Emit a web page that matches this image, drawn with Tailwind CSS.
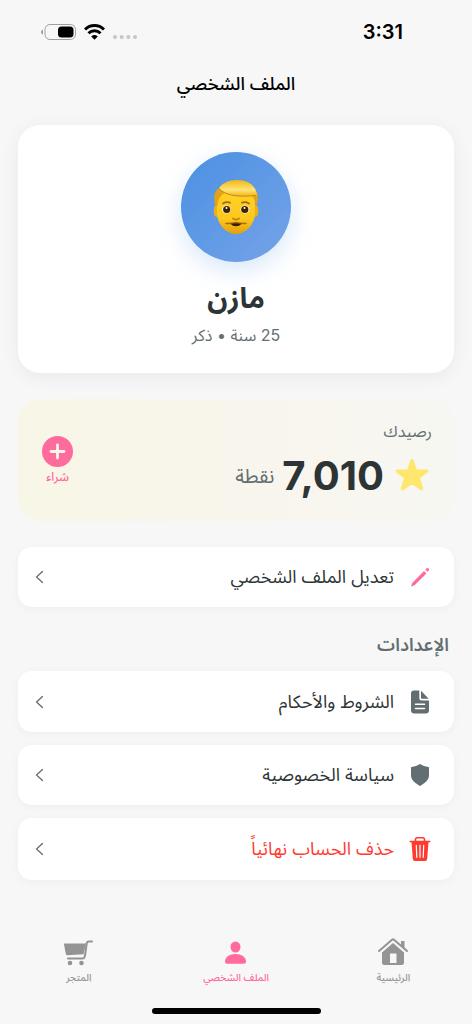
<!DOCTYPE html>
<html lang="ar" dir="rtl">
<head>
<meta charset="utf-8">
<meta name="viewport" content="width=device-width, initial-scale=1">
<title>الملف الشخصي</title>
<script src="https://cdn.jsdelivr.net/npm/@tailwindcss/browser@4"></script>
</head>
<body class="flex min-h-screen flex-col bg-[#f7f7f7] font-['Inter','Noto_Sans_Arabic','DejaVu_Sans',sans-serif] text-[#2d3436]">
  <header>
    <div class="flex h-16 items-center justify-between pr-[69px] pl-[41px]">
      <time class="text-xl font-semibold text-black">3:31</time>
      <div dir="ltr" class="flex items-center gap-2">
        <svg class="h-4 w-[35px]" viewBox="0 0 35 16" aria-hidden="true">
          <path d="M2 5.5Q0 6.500 0 8T2 10.500Z" fill="#999"/>
          <rect x="4" y=".5" width="30.500" height="15" rx="5" fill="none" stroke="#a0a0a0"/>
          <rect x="17" y="2.500" width="15.500" height="11" rx="3.500" fill="#000"/>
        </svg>
        <svg class="h-4 w-[21px]" viewBox="0 0 21 16" fill="none" stroke="#000" stroke-width="3" aria-hidden="true">
          <path d="M1 5.500A13.500 13.500 0 0 1 20 5.500M4.500 9.200A8.500 8.500 0 0 1 16.500 9.200"/>
          <path d="M10.500 15.700L7.200 12.400Q10.500 9.500 13.800 12.400Z" fill="#000" stroke="none"/>
        </svg>
        <svg class="mt-2.5 h-1 w-6" viewBox="0 0 24 4" fill="#c6c6c6" aria-hidden="true">
          <circle cx="2" cy="2" r="2"/><circle cx="8.700" cy="2" r="2"/><circle cx="15.300" cy="2" r="2"/><circle cx="22" cy="2" r="2"/>
        </svg>
      </div>
    </div>
    <h1 class="pt-0.5 text-center text-lg leading-9 font-medium text-black">الملف الشخصي</h1>
  </header>

  <main class="flex flex-col px-[18px] pt-[23px]">
    <section class="flex flex-col items-center rounded-[22px] bg-white pt-[27px] pb-6 shadow-[0_4px_20px_rgba(0,0,0,0.06)]">
      <div class="grid size-[110px] place-items-center rounded-full bg-linear-to-br from-[#4a90e2] to-[#74a3e8] shadow-[0_8px_24px_rgba(74,144,226,0.22)]">
        <svg class="h-[56px] w-[46px]" viewBox="0 0 46 56" role="img" aria-label="رجل">
          <defs>
            <linearGradient id="face" x1="0" y1="0" x2="0" y2="1"><stop offset="0" stop-color="#ffd42c"/><stop offset=".7" stop-color="#fcc81c"/><stop offset="1" stop-color="#e2a00a"/></linearGradient>
            <linearGradient id="hair" x1="0" y1="0" x2="0" y2="1"><stop offset="0" stop-color="#f2b50f"/><stop offset=".6" stop-color="#ffe478"/><stop offset="1" stop-color="#f3b616"/></linearGradient>
          </defs>
          <ellipse cx="3.500" cy="32" rx="2.800" ry="6" fill="#eeb01a"/><ellipse cx="42.500" cy="32" rx="2.800" ry="6" fill="#eeb01a"/>
          <path d="M4 18C4 8 12 5 23 5s19 3 19 13v16c0 11-9 21-19 21S4 45 4 34Z" fill="url(#face)"/>
          <path d="M2.500 27C-.5 17 2 11 7 8.500L12 14c-4 2-7 5-7.500 13Z" fill="#e5a313"/>
          <path d="M43 27c3-7 2-12 0-15L38 16c3 2 4 6 5 11Z" fill="#e5a313"/>
          <path d="M6 9.500C9 4 16 1 24 1c12 0 19 6 20 15.500-14 1.500-31 1.500-38-7Z" fill="url(#hair)"/>
          <path d="M6 9.500c7 8 22 8.500 37 7" fill="none" stroke="#c9890c" stroke-width="1"/>
          <path d="M10 24.500q3.500-2.200 7-.8M29 23.700q3.500-1.400 7 .8" fill="none" stroke="#a56a10" stroke-width="1.800" stroke-linecap="round"/>
          <ellipse cx="13.500" cy="30.500" rx="4.500" ry="4" fill="#fff8dc"/><ellipse cx="32" cy="30.500" rx="4.500" ry="4" fill="#fff8dc"/>
          <circle cx="13.700" cy="30.500" r="3.600" fill="#3a2205"/><circle cx="31.800" cy="30.500" r="3.600" fill="#3a2205"/>
          <circle cx="13.500" cy="28.900" r="1" fill="#fff"/><circle cx="31.500" cy="28.900" r="1" fill="#fff"/>
          <path d="M20 39.500q3 2.200 6 0" fill="none" stroke="#c4850d" stroke-width="2" stroke-linecap="round"/>
          <path d="M13 44.500q5 .3 10-.9 5 1.200 10 .9" fill="none" stroke="#a86c0d" stroke-width="1.600" stroke-linecap="round"/>
          <path d="M17.500 44.700q5.500-1 11 0-2 2.600-5.500 2.600t-5.500-2.600Z" fill="#3b1d05"/>
        </svg>
      </div>
      <h2 class="mt-4 text-[28px] leading-10 font-bold">مازن</h2>
      <p class="mt-1 text-base leading-[27px] text-[#636e72]">25 سنة • ذكر</p>
    </section>

    <section class="mt-[26px] flex items-center justify-between rounded-[22px] bg-linear-to-r from-[#f8f6e6] via-[#f8f5ec] to-[#f7f7f2] pt-5 pb-[18px] pr-[22px] pl-6">
      <div>
        <p class="text-base leading-6 text-[#636e72]">رصيدك</p>
        <div class="mt-1.5 flex items-center">
          <svg class="size-10" viewBox="0 0 40 40" aria-hidden="true"><path d="M20 4.500L23.800 15H35L26.300 21.600L29.700 33L20 26.200L10.300 33L13.700 21.600L5 15H16.200Z" fill="#ffe66d" stroke="#ffe66d" stroke-width="3" stroke-linejoin="round"/></svg>
          <strong class="mr-2 text-[40px] leading-[54px] font-bold">7,010</strong>
          <span class="mr-2 text-xl text-[#636e72]">نقطة</span>
        </div>
      </div>
      <button type="button" class="flex flex-col items-center text-xs leading-5 font-medium text-[#ff6b9d]">
        <svg class="size-[31px]" viewBox="0 0 31 31" aria-hidden="true"><circle cx="15.500" cy="15.500" r="15.500" fill="#ff6b9d"/><path d="M15.500 9v13M9 15.500h13" stroke="#f9f6ea" stroke-width="2.800" stroke-linecap="round"/></svg>
        <span>شراء</span>
      </button>
    </section>

    <button type="button" class="mt-[26px] flex h-[60px] items-center rounded-[14px] bg-white pr-[22px] pl-4 shadow-[0_2px_10px_rgba(0,0,0,0.04)]">
      <svg class="size-6" viewBox="0 0 24 24" fill="#ff6b9d" aria-hidden="true"><path d="M16 5.900l2.500 2.500L6.500 20.300l-3.500 1.300 1.200-3.600ZM17.300 4.600l1.400-1.300q1.100-.8 2 .1t.1 2l-1.300 1.400Z"/></svg>
      <span class="mr-3.5 text-lg">تعديل الملف الشخصي</span>
      <svg class="mr-auto h-4 w-3" viewBox="0 0 12 16" fill="none" stroke="#636e72" stroke-width="1.300" stroke-linecap="round" stroke-linejoin="round" aria-hidden="true"><path d="M8.500 2.500L2.500 8l6 5.500"/></svg>
    </button>

    <h2 class="mt-6 mr-[5px] text-lg leading-7 font-semibold text-[#636e72]">الإعدادات</h2>

    <nav class="mt-3 flex flex-col gap-[13px]">
      <a href="#terms" class="flex h-[61px] items-center rounded-[14px] bg-white pr-[22px] pl-4 shadow-[0_2px_10px_rgba(0,0,0,0.04)]">
        <svg class="size-6" viewBox="0 0 24 24" aria-hidden="true"><path d="M6 .5h5.300V8q0 2.500 2.500 2.500H21V20q0 3.500-3.500 3.500h-11Q3 23.500 3 20V3.500Q3 .5 6 .5Z" fill="#636e72"/><path d="M13 .8L20.700 8.800H14.200Q13 8.800 13 7.600Z" fill="#636e72"/><path d="M7.500 14.300h9M7.500 18.500h9" stroke="#fff" stroke-width="1.500" stroke-linecap="round"/></svg>
        <span class="mr-3.5 text-lg">الشروط والأحكام</span>
        <svg class="mr-auto h-4 w-3" viewBox="0 0 12 16" fill="none" stroke="#636e72" stroke-width="1.300" stroke-linecap="round" stroke-linejoin="round" aria-hidden="true"><path d="M8.500 2.500L2.500 8l6 5.500"/></svg>
      </a>
      <a href="#privacy" class="flex h-[60px] items-center rounded-[14px] bg-white pr-[22px] pl-4 shadow-[0_2px_10px_rgba(0,0,0,0.04)]">
        <svg class="size-6" viewBox="0 0 24 24" aria-hidden="true"><path d="M12 1q4 2.600 8.300 3 .7.100.7.800v7.500c0 5-4.500 8-9 10.700-4.500-2.700-9-5.700-9-10.700V4.800q0-.7.700-.8Q8 3.600 12 1Z" fill="#636e72"/></svg>
        <span class="mr-3.5 text-lg">سياسة الخصوصية</span>
        <svg class="mr-auto h-4 w-3" viewBox="0 0 12 16" fill="none" stroke="#636e72" stroke-width="1.300" stroke-linecap="round" stroke-linejoin="round" aria-hidden="true"><path d="M8.500 2.500L2.500 8l6 5.500"/></svg>
      </a>
      <button type="button" class="flex h-[62px] items-center rounded-[14px] bg-white pr-[22px] pl-4 text-[#ff3b30] shadow-[0_2px_10px_rgba(0,0,0,0.04)]">
        <svg class="size-6" viewBox="0 0 24 24" fill="none" aria-hidden="true"><path d="M3.500 5h17l-1.300 17q-.2 2-2.200 2H7q-2 0-2.200-2Z" fill="#ff3b30"/><path d="M2.200 4.500h19.600M7.500 4.500V2.600Q7.500.8 9.300.8h5.400q1.800 0 1.800 1.800v1.900" stroke="#ff3b30" stroke-width="1.600" stroke-linecap="round"/><path d="M8.300 8.300l.5 12M12 8.300v12M15.700 8.300l-.5 12" stroke="#fff" stroke-width="1.200" stroke-linecap="round"/></svg>
        <span class="mr-3.5 text-lg">حذف الحساب نهائياً</span>
        <svg class="mr-auto h-4 w-3" viewBox="0 0 12 16" fill="none" stroke="#636e72" stroke-width="1.300" stroke-linecap="round" stroke-linejoin="round" aria-hidden="true"><path d="M8.500 2.500L2.500 8l6 5.500"/></svg>
      </button>
    </nav>
  </main>

  <footer class="mt-auto pb-2.5">
    <nav class="grid grid-cols-3 text-[10px] leading-5 font-medium text-[#949494]">
      <a href="#home" class="flex flex-col items-center">
        <svg class="size-8" viewBox="0 0 32 32" aria-hidden="true"><path d="M2 16L15 4.800q1-.8 2 0L30 16" fill="none" stroke="#949494" stroke-width="2" stroke-linecap="round" stroke-linejoin="round"/><path d="M24 6h3.500v7.500L24 10.500Z" fill="#949494"/><path fill-rule="evenodd" d="M16 8L27 17.500v10q0 2.500-2.500 2.500h-17Q5 30 5 27.500v-10ZM13 18.500V28h6.500v-9.500Z" fill="#949494"/></svg>
        <span>الرئيسية</span>
      </a>
      <a href="#profile" aria-current="page" class="flex flex-col items-center text-[#ff6b9d]">
        <svg class="size-8" viewBox="0 0 32 32" fill="#ff6b9d" aria-hidden="true"><ellipse cx="15.500" cy="12" rx="5" ry="5.500"/><path d="M5 26.500c0-4.500 4.500-7.500 10.500-7.500s10.500 3 10.500 7.500q0 2.200-2 2.200H7q-2 0-2-2.200Z"/></svg>
        <span>الملف الشخصي</span>
      </a>
      <a href="#store" class="flex flex-col items-center">
        <svg class="size-8" viewBox="0 0 32 32" aria-hidden="true"><path d="M1.500 8.500H23l-2.500 10.700L4.300 20.300q-1.200 0-1.500-1.500L1 9.500Q1 8.500 1.500 8.500Z" fill="#949494"/><path d="M29 6.500h-3.500q-1.300 0-1.700 1.500l-2 13.500q-.5 2-2.300 2H5" fill="none" stroke="#949494" stroke-width="2" stroke-linecap="round" stroke-linejoin="round"/><circle cx="7" cy="28" r="2.300" fill="#949494"/><circle cx="18.500" cy="28" r="2.300" fill="#949494"/></svg>
        <span>المتجر</span>
      </a>
    </nav>
    <div class="mx-auto mt-[21px] h-[6px] w-[169px] rounded-full bg-black"></div>
  </footer>
</body>
</html>
